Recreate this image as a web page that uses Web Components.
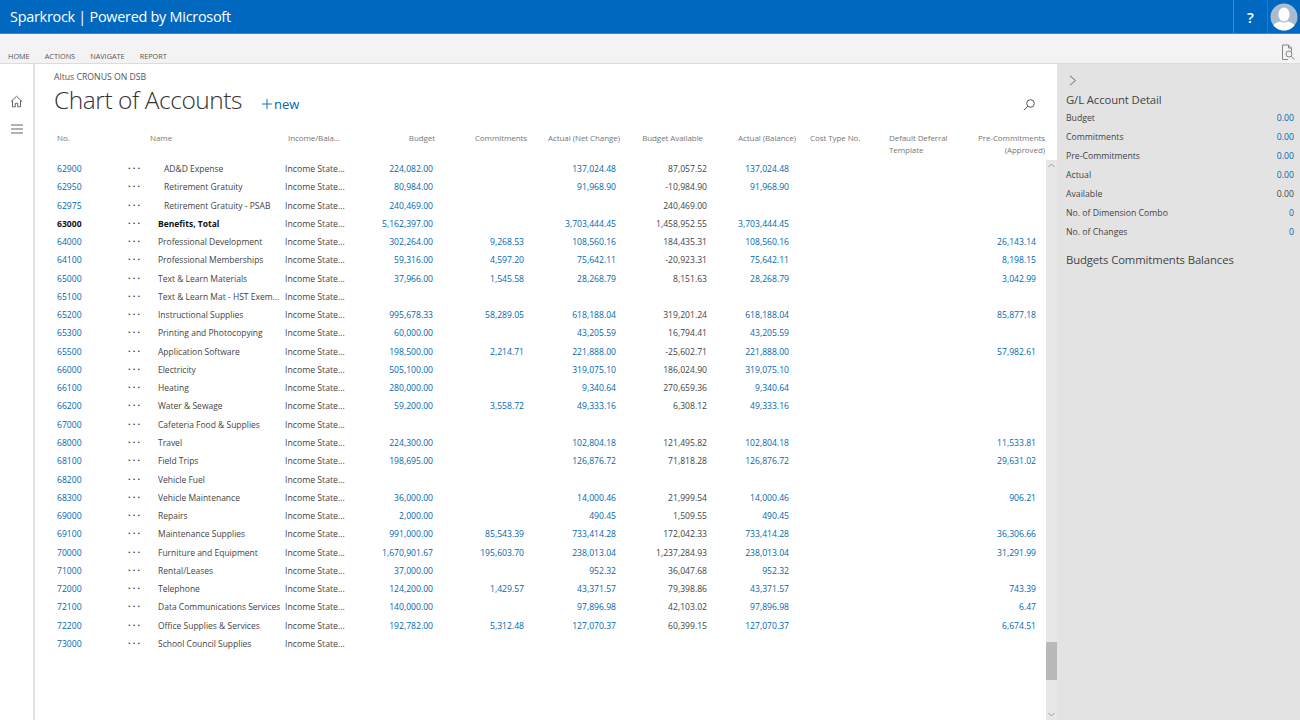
<!DOCTYPE html>
<html lang="en"><head><meta charset="utf-8"><title>Chart of Accounts</title>
<style>
html,body{margin:0;height:720px;overflow:hidden;background:#fff;font-family:"Open Sans","Noto Sans",sans-serif;color:#444}
</style></head><body>
<coa-app></coa-app>
<script>
const def=(name,html,setup)=>customElements.define(name,class extends HTMLElement{
  constructor(){super();const s=this.attachShadow({mode:'open'});s.innerHTML=html;}
  connectedCallback(){setup&&setup.call(this,this.shadowRoot);}
});
def('app-header',`<style>
:host{display:flex;align-items:stretch;height:33px;background:#0069bf;border-bottom:1px solid #3a8ad0;color:#fff}
.brand{flex:1;font-size:14.400px;line-height:33px;padding-left:10px;letter-spacing:-.25px;white-space:nowrap}
.btn{width:33px;border-left:1px solid #3f8fd3;display:flex;align-items:center;justify-content:center;font-weight:600;font-size:15px}
.av{width:32px;border-left:1px solid #1f7cc9;display:flex;align-items:center;justify-content:center}
</style><div class="brand"><slot></slot></div><div class="btn">?</div>
<div class="av"><svg width="28" height="28" viewBox="0 0 28 28"><defs><clipPath id="c"><circle cx="14" cy="14" r="13.5"/></clipPath></defs><circle cx="14" cy="14" r="13.5" fill="#a9bcd0"/><g clip-path="url(#c)" fill="#fff"><ellipse cx="14" cy="11.5" rx="5.6" ry="7"/><path d="M1 29c0-7 5-9.500 9-10.500 2.500 1.500 5.500 1.500 8 0 4 1 9 3.500 9 10.500z"/></g></svg></div>`);
def('app-ribbon',`<style>
:host{display:flex;align-items:flex-end;height:29px;background:#f3f3f3;border-bottom:1px solid #dcdcdc;position:relative;font-size:7.300px;color:#555;text-transform:uppercase}
nav{flex:1;display:flex;gap:15px;padding:0 0 1px 8px;line-height:11px}
svg{margin:0 5px 2px 0}
</style><nav><span>Home</span><span>Actions</span><span>Navigate</span><span>Report</span></nav>
<svg width="14" height="17" viewBox="0 0 14 17" fill="none" stroke="#7a7a7a" stroke-width=".9"><path d="M7 15.500H1.500V1h6l3 3v3.500M7.500 1v3h3"/><circle cx="8" cy="10" r="3"/><path d="M10.200 12.200l3 3.300"/></svg>`);
def('side-rail',`<style>
:host{display:flex;flex-direction:column;align-items:center;width:33px;flex:none;border-right:2px solid #e3e3e3;padding-top:31px;box-sizing:content-box}
svg{display:block}
.m{margin-top:16px}
</style><svg width="13" height="13" viewBox="0 0 13 13" fill="none" stroke="#666" stroke-width="1"><path d="M.8 6.700L6.500 1.300l5.700 5.400M2.500 5.500v6.300h2.800V8.300h2.400v3.500h2.800V5.500"/></svg>
<svg class="m" width="12" height="10" viewBox="0 0 12 10" stroke="#666" stroke-width="1.200"><path d="M0 1h12M0 5h12M0 9h12"/></svg>`);
const COLS='71px 30px 127px 60px 88px 91px 92px 91px 82px 1fr 247px';
def('coa-head',`<style>
:host{display:grid;grid-template-columns:93px 138px 60px 87px 92px 93px 83px 93px 93px 79px 1fr;height:28px;padding:0 12px 0 22px;font-size:8px;letter-spacing:-.08px;line-height:12px;color:#777;align-items:start}
.r{text-align:right}.nw{white-space:nowrap}
</style><div>No.</div><div>Name</div><div class="nw">Income/Bala...</div><div class="r">Budget</div><div class="r">Commitments</div><div class="r nw">Actual (Net Change)</div><div class="r nw">Budget Available</div><div class="r nw">Actual (Balance)</div><div style="padding-left:14px" class="nw">Cost Type No.</div><div>Default Deferral Template</div><div class="r">Pre-Commitments (Approved)</div>`);
customElements.define('coa-row',class extends HTMLElement{
  constructor(){super();this.attachShadow({mode:'open'});}
  set data(d){
    const [no,name,ind,vals]=d;const b=ind===2;
    const cell=(v,c)=>`<span class="r ${c}">${v||''}</span>`;
    const esc=s=>s.replace(/&/g,'&amp;');
    this.shadowRoot.innerHTML=`<style>
:host{display:grid;grid-template-columns:${COLS};height:18.27px;line-height:18.27px;font-size:8.600px;color:#444;white-space:nowrap}
.l{color:#0067b0}
.dots{color:#333;font-size:9px;letter-spacing:2.200px;font-weight:700;line-height:16px}
.nm{overflow:hidden;font-size:8.500px}
.inc{font-size:8.700px}
.r{text-align:right}
.bold{font-weight:700;color:#111}
</style><span class="${b?'bold':'l'}">${no}</span><span class="dots">&#183;&#183;&#183;</span><span class="nm ${b?'bold':''}" style="padding-left:${ind===1?6:0}px">${esc(name)}</span><span class="inc">Income State...</span>${cell(vals[0],'l')}${cell(vals[1],'l')}${cell(vals[2],'l')}${cell(vals[3],'')}${cell(vals[4],'l')}<span></span>${cell(vals[5],'l')}`;
  }
});
const DATA=[
['62900','AD&D Expense',1,['224,082.00','','137,024.48','87,057.52','137,024.48','']],
['62950','Retirement Gratuity',1,['80,984.00','','91,968.90','-10,984.90','91,968.90','']],
['62975','Retirement Gratuity - PSAB',1,['240,469.00','','','240,469.00','','']],
['63000','Benefits, Total',2,['5,162,397.00','','3,703,444.45','1,458,952.55','3,703,444.45','']],
['64000','Professional Development',0,['302,264.00','9,268.53','108,560.16','184,435.31','108,560.16','26,143.14']],
['64100','Professional Memberships',0,['59,316.00','4,597.20','75,642.11','-20,923.31','75,642.11','8,198.15']],
['65000','Text & Learn Materials',0,['37,966.00','1,545.58','28,268.79','8,151.63','28,268.79','3,042.99']],
['65100','Text & Learn Mat - HST Exem...',0,['','','','','','']],
['65200','Instructional Supplies',0,['995,678.33','58,289.05','618,188.04','319,201.24','618,188.04','85,877.18']],
['65300','Printing and Photocopying',0,['60,000.00','','43,205.59','16,794.41','43,205.59','']],
['65500','Application Software',0,['198,500.00','2,214.71','221,888.00','-25,602.71','221,888.00','57,982.61']],
['66000','Electricity',0,['505,100.00','','319,075.10','186,024.90','319,075.10','']],
['66100','Heating',0,['280,000.00','','9,340.64','270,659.36','9,340.64','']],
['66200','Water & Sewage',0,['59,200.00','3,558.72','49,333.16','6,308.12','49,333.16','']],
['67000','Cafeteria Food & Supplies',0,['','','','','','']],
['68000','Travel',0,['224,300.00','','102,804.18','121,495.82','102,804.18','11,533.81']],
['68100','Field Trips',0,['198,695.00','','126,876.72','71,818.28','126,876.72','29,631.02']],
['68200','Vehicle Fuel',0,['','','','','','']],
['68300','Vehicle Maintenance',0,['36,000.00','','14,000.46','21,999.54','14,000.46','906.21']],
['69000','Repairs',0,['2,000.00','','490.45','1,509.55','490.45','']],
['69100','Maintenance Supplies',0,['991,000.00','85,543.39','733,414.28','172,042.33','733,414.28','36,306.66']],
['70000','Furniture and Equipment',0,['1,670,901.67','195,603.70','238,013.04','1,237,284.93','238,013.04','31,291.99']],
['71000','Rental/Leases',0,['37,000.00','','952.32','36,047.68','952.32','']],
['72000','Telephone',0,['124,200.00','1,429.57','43,371.57','79,398.86','43,371.57','743.39']],
['72100','Data Communications Services',0,['140,000.00','','97,896.98','42,103.02','97,896.98','6.47']],
['72200','Office Supplies & Services',0,['192,782.00','5,312.48','127,070.37','60,399.15','127,070.37','6,674.51']],
['73000','School Council Supplies',0,['','','','','','']]];
def('coa-rows',`<style>:host{display:block;flex:1;padding:0 10px 0 22px;min-width:0}</style><div id="w"></div>`,function(s){
  const w=s.getElementById('w');
  DATA.forEach(d=>{const r=document.createElement('coa-row');r.data=d;w.appendChild(r);});
});
def('v-scroll',`<style>
:host{display:flex;flex-direction:column;align-items:stretch;width:11px;flex:none;background:#e7e7e7}
.thumb{height:38px;background:#b9b9b9;margin-top:474px}
svg{display:block;margin:3px auto 0}
.d{margin-top:auto;margin-bottom:3px}
</style><svg width="7" height="5" viewBox="0 0 7 5" fill="none" stroke="#9a9a9a"><path d="M.5 4L3.500 1l3 3"/></svg><div class="thumb"></div><svg class="d" width="7" height="5" viewBox="0 0 7 5" fill="none" stroke="#9a9a9a"><path d="M.5 1l3 3 3-3"/></svg>`);
def('page-title',`<style>
:host{display:block;height:68px;box-sizing:border-box;padding:7px 0 0 19px;position:relative}
.crumb{font-size:8.700px;line-height:12px;color:#555}
.row{display:flex;align-items:center;height:36px;margin-top:-1px}
h1{margin:0;font-size:24.500px;letter-spacing:-.45px;font-weight:300;color:#333;line-height:36px;white-space:nowrap}
.new{margin-left:20px;margin-top:7px;color:#0067b0;font-size:13px;display:flex;align-items:center;gap:2px}
.s{margin-left:auto;margin-right:22px;margin-top:9px}
</style><div class="crumb"><slot name="crumb"></slot></div><div class="row"><h1><slot></slot></h1>
<div class="new"><svg width="10" height="10" viewBox="0 0 10 10" stroke="#0067b0" stroke-width=".9"><path d="M5 0v10M0 5h10"/></svg><span>new</span></div>
<svg class="s" width="12" height="12" viewBox="0 0 12 12" fill="none" stroke="#555" stroke-width="1"><circle cx="7.500" cy="4.500" r="3.800"/><path d="M4.800 7.200L.8 11.200"/></svg></div>`);
def('fact-row',`<style>
:host{display:flex;justify-content:space-between;height:19px;line-height:19px;font-size:8.700px;color:#444}
:host([link]) .v{color:#0067b0}
</style><span><slot></slot></span><span class="v"><slot name="v"></slot></span>`);
def('fact-box',`<style>
:host{display:block;width:243px;flex:none;box-sizing:border-box;background:#e3e3e3;padding:11px 6px 0 9px}
svg{display:block;margin-left:3px}
h2{margin:0;font-weight:400;font-size:11.300px;letter-spacing:-.1px;color:#444;line-height:16px;white-space:nowrap}
.a{margin-top:6px;height:16.500px;line-height:16px}
.b{margin-top:10.500px}
</style><svg width="8" height="11" viewBox="0 0 8 11" fill="none" stroke="#666" stroke-width="1"><path d="M1 .8l5.500 4.700L1 10.200"/></svg>
<h2 class="a">G/L Account Detail</h2>
<slot></slot>
<h2 class="b">Budgets Commitments Balances</h2>`);
def('coa-app',`<style>
:host{display:flex;flex-direction:column;height:720px}
.body{flex:1;display:flex;min-height:0}
.main{flex:1;display:flex;flex-direction:column;min-width:0}
.tbl{flex:1;display:flex;min-height:0}
</style>
<app-header>Sparkrock | Powered by Microsoft</app-header>
<app-ribbon></app-ribbon>
<div class="body"><side-rail></side-rail>
<div class="main"><page-title><span slot="crumb">Altus CRONUS ON DSB</span>Chart of Accounts</page-title>
<coa-head></coa-head>
<div class="tbl"><coa-rows></coa-rows><v-scroll></v-scroll></div></div>
<fact-box>
<fact-row link>Budget<span slot="v">0.00</span></fact-row>
<fact-row link>Commitments<span slot="v">0.00</span></fact-row>
<fact-row link>Pre-Commitments<span slot="v">0.00</span></fact-row>
<fact-row link>Actual<span slot="v">0.00</span></fact-row>
<fact-row>Available<span slot="v">0.00</span></fact-row>
<fact-row link>No. of Dimension Combo<span slot="v">0</span></fact-row>
<fact-row link>No. of Changes<span slot="v">0</span></fact-row>
</fact-box></div>`);
</script>
</body></html>
